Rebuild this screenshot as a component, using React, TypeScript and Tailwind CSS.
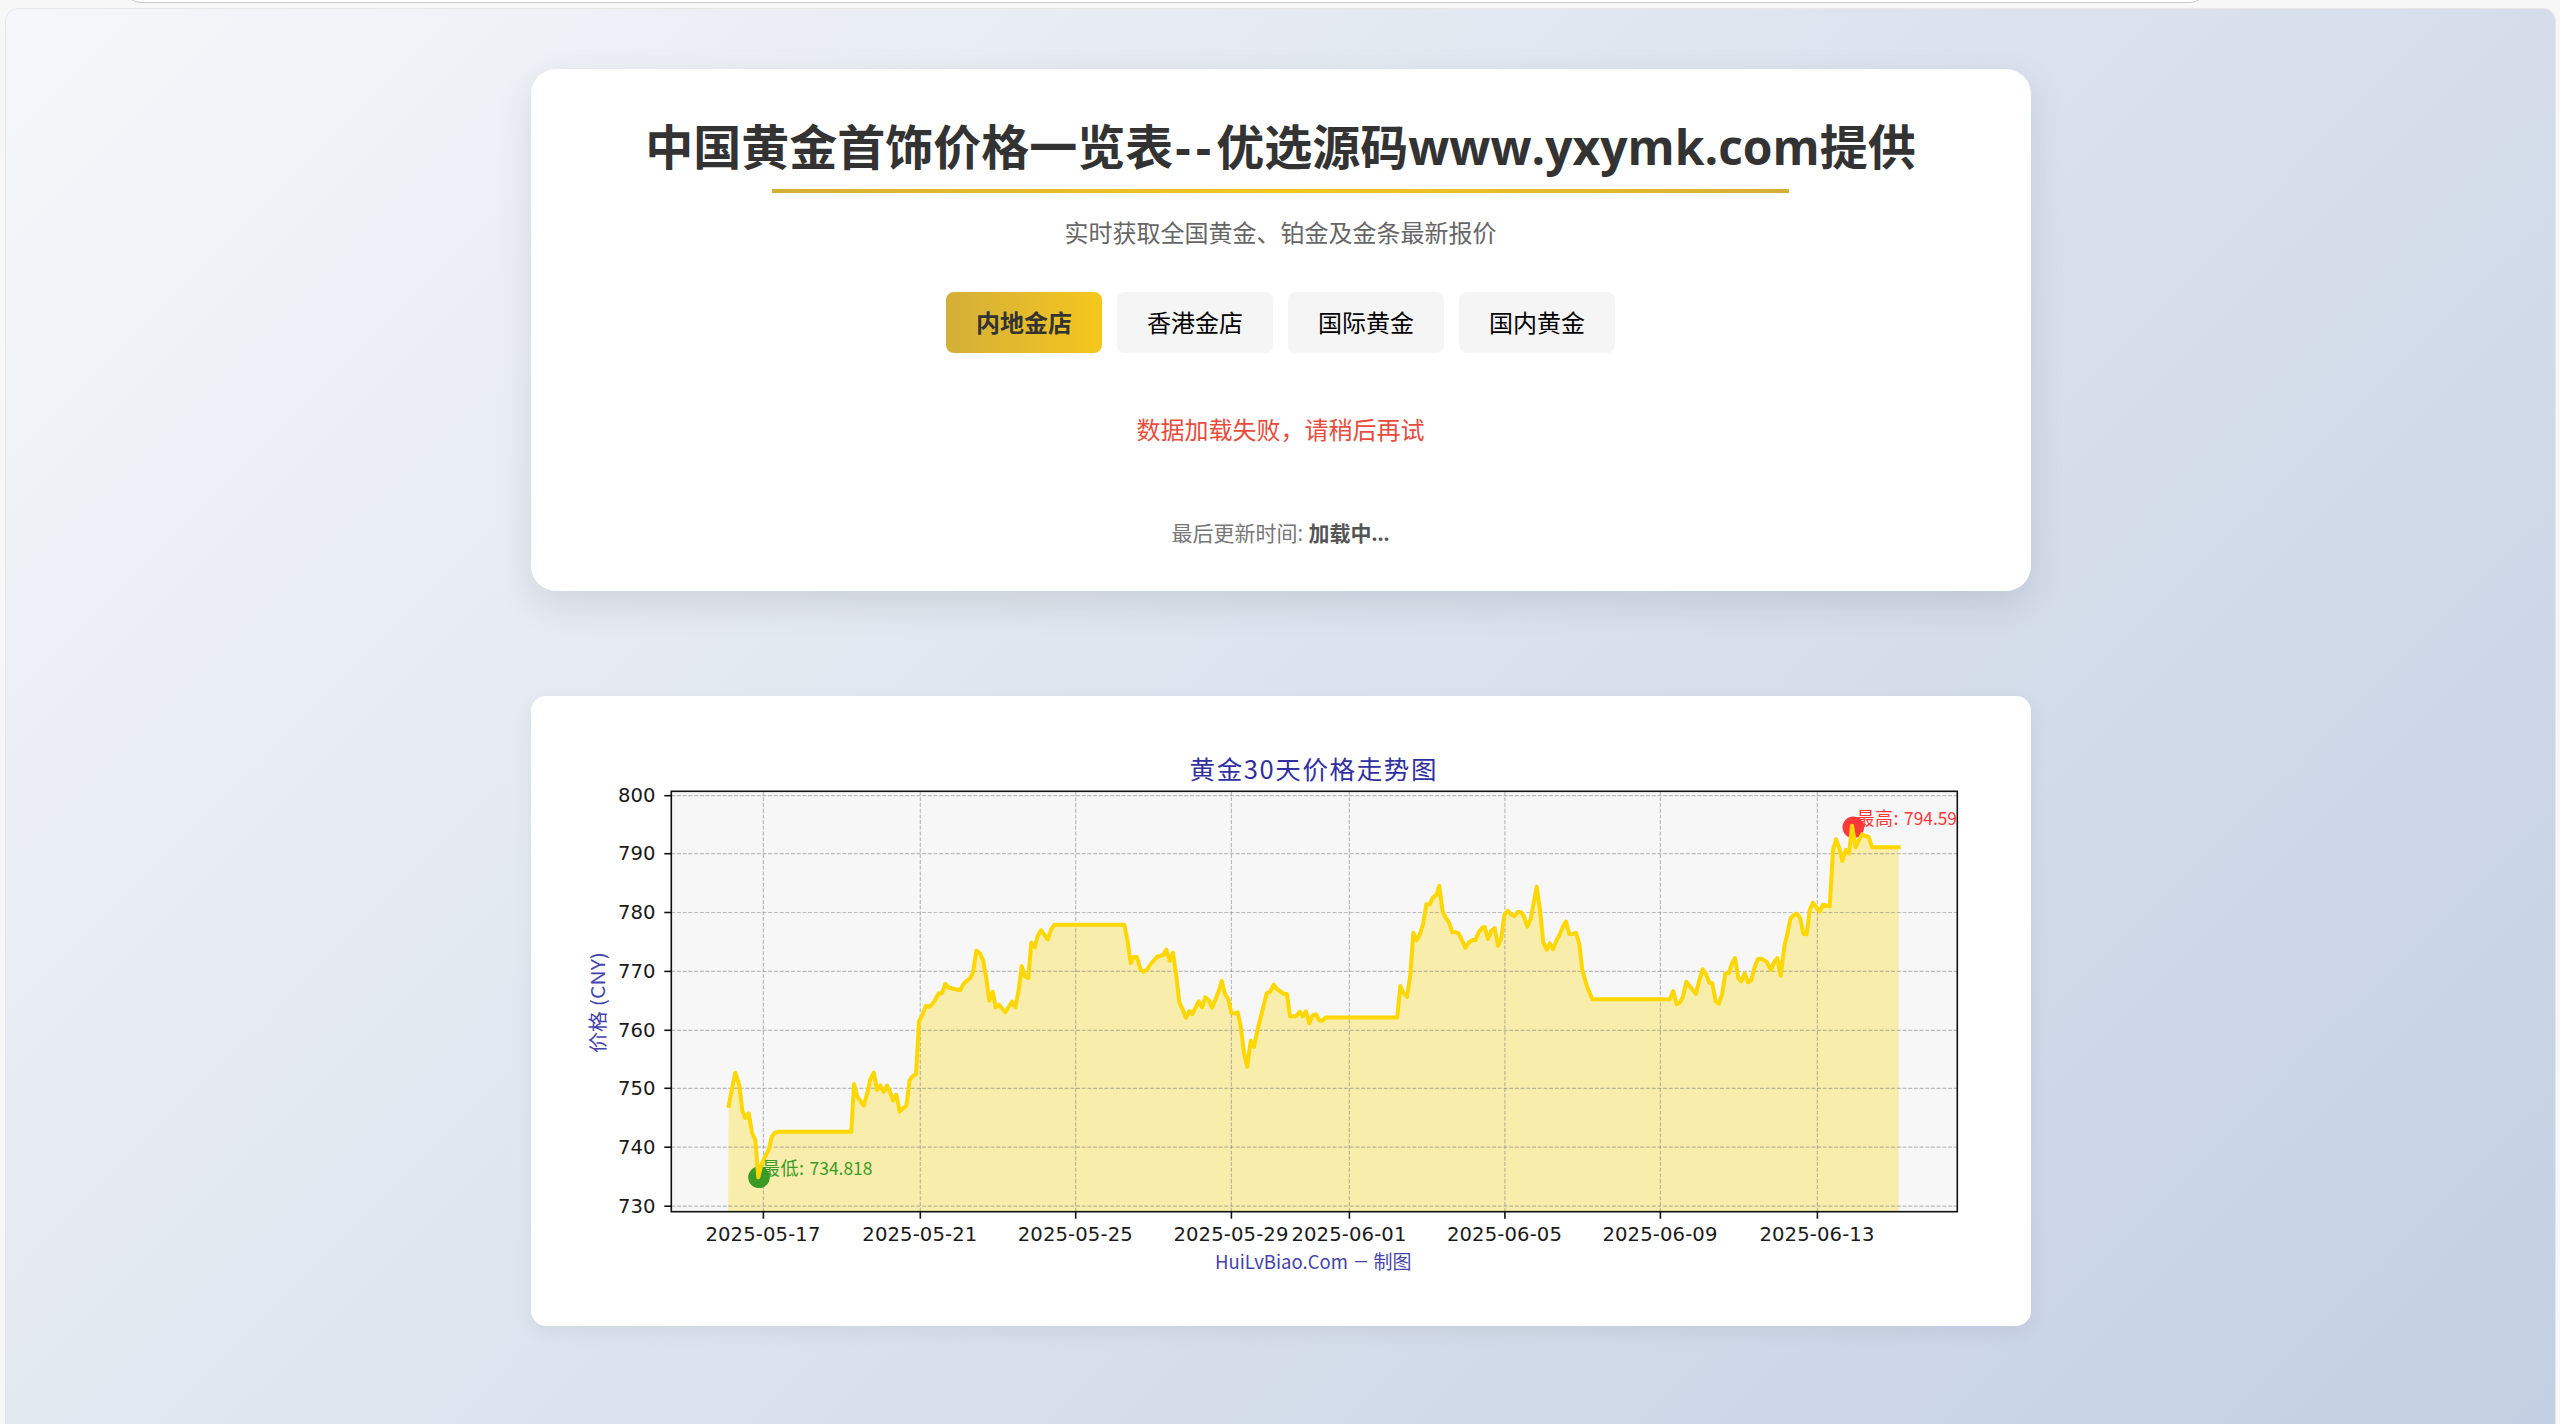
import React, { useState } from 'react'
import clsx from 'clsx'

const TABS = ['内地金店', '香港金店', '国际黄金', '国内黄金']

// Plot frame of the trend chart
const FRAME = { left: 671.3, top: 791.3, right: 1957.3, bottom: 1211.7 }

const Y_TICKS = [
  { label: '800', y: 795.7 },
  { label: '790', y: 853.7 },
  { label: '780', y: 912.5 },
  { label: '770', y: 971.4 },
  { label: '760', y: 1030.3 },
  { label: '750', y: 1088.3 },
  { label: '740', y: 1147.2 },
  { label: '730', y: 1206.2 }
]

const X_TICKS = [
  { label: '2025-05-17', x: 763.4 },
  { label: '2025-05-21', x: 920.3 },
  { label: '2025-05-25', x: 1075.7 },
  { label: '2025-05-29', x: 1231.4 },
  { label: '2025-06-01', x: 1349.4 },
  { label: '2025-06-05', x: 1504.9 },
  { label: '2025-06-09', x: 1660.4 },
  { label: '2025-06-13', x: 1817.4 }
]

const POINTS = [
  '728.7,1106 732.3,1087.3 735.3,1072.7 739.3,1085 742.3,1110.7 745.3,1118 748.7,1113.3 752,1132.7 755.3,1140 758.3,1177.3',
  '761.3,1165 765.3,1156 768.7,1150 771.7,1136.7 775,1132.7 779.3,1131.7 851.3,1131.7 854,1084 857.3,1096.7 863.7,1105.7',
  '867.3,1093.3 870.3,1079.3 873.7,1072.7 877,1090 880.3,1085.3 883.7,1092 887,1085.7 890,1091.7 893.3,1100.7 896.3,1094.7',
  '899.7,1111.7 903,1108.3 906.3,1106 909.7,1080 912.7,1076.3 916,1074 919,1021.7 922.7,1014 925.7,1006 929.7,1006.7',
  '934,1001.7 938.7,993.3 942,993.3 945.3,984 949,987.7 960,990.3 964,983.3 970,978.3 973,972.7 976.3,950.7',
  '980,953.3 983.3,960.7 986.3,978.3 989.3,1000.7 992.7,991.7 995.7,1007.3 999,1004.7 1005.3,1012.3 1012,1001.7 1015.3,1007.3',
  '1018.7,990 1021.7,966 1024.7,976 1028.3,978 1031.3,942.7 1034.7,947.3 1037.7,935.7 1041,930.3 1047.7,939.3 1051,930',
  '1054.3,924.7 1124.3,924.7 1127.7,941.7 1130.7,963.3 1134,957 1137,957 1140.3,969.3 1143.3,971.7 1146.7,970 1150.7,964',
  '1157.3,956.7 1163,955.3 1166.3,949.7 1169.7,960.7 1173,952.7 1176,973.3 1179.3,1002.3 1182.7,1009.3 1186,1018 1189.3,1011',
  '1192.3,1014 1198.7,1001.3 1202,1007.3 1205.3,997.3 1208.7,1000 1212,1007.7 1218.3,992.3 1221.7,981 1225,994 1228.3,999',
  '1231.3,1012.7 1234.7,1013.7 1237.7,1012.3 1241,1028.3 1244,1053.3 1247.3,1066.7 1250.7,1040.7 1254,1047 1257.3,1030.7 1260.7,1017.3',
  '1266.7,993.3 1270.3,991.7 1273.7,984.7 1277,989 1284,994 1287,994 1290,1016.3 1296,1016.3 1299.7,1011.7 1302.7,1016.3',
  '1306,1011.3 1309.3,1023.3 1312.7,1015.3 1316,1014.3 1319.3,1020.3 1322.3,1020.7 1325.7,1017.5 1397.2,1017.5 1400.3,986 1403.3,992.7',
  '1407,997 1410.3,975 1413.3,932.7 1416.7,940.3 1420,934 1423.3,923.3 1426.3,904.3 1429.7,904.3 1433,897.3 1436.3,895',
  '1439.3,886 1442.7,911.7 1445.7,917.7 1449,922.3 1452.3,932.3 1456,932.3 1459,933.7 1465.3,947.7 1469.3,942 1472.7,940',
  '1475.3,940.3 1478.7,932.3 1482,928 1484.7,927 1488,939 1491.3,930.7 1494.7,928 1498,946 1501.3,938.3 1504.3,915',
  '1507.7,910.7 1511,914.3 1514.3,916.3 1517.7,912 1521,912 1524,916.7 1527.3,926.7 1530.7,919 1536.7,886.7 1540,910',
  '1543.3,942.7 1546.7,949.7 1549.7,943.3 1553,949.3 1556.7,940 1560,934 1563.3,925.7 1566,921.7 1569.3,934 1572.7,934',
  '1576,932.7 1579.3,944 1582.3,970 1587.3,987.3 1592.3,999.3 1670,999.3 1673.3,991 1676.7,1004.3 1679.7,1002.7 1683,996.7',
  '1686.3,981.7 1696,994 1699.3,980 1702.7,969.3 1706,974 1709.3,982.7 1712.3,983.3 1715.7,1001.3 1718.7,1003.7 1722,994.7',
  '1725.3,973.3 1728.7,973.3 1732,963.3 1735,958 1738.3,978 1741.3,981.3 1744.7,973.3 1748,982.3 1751.3,980 1754.7,966.7',
  '1758,959 1761.7,958.7 1766.7,962 1771,970 1774.3,961.7 1777.3,958 1780.7,975.7 1784.3,946.7 1787.3,934 1790.3,919.3',
  '1793.3,915.3 1797,913.7 1800.3,918.3 1803.3,933.7 1806.7,934.3 1809.7,910 1813,902.7 1819.7,911.7 1823,904.7 1829.7,906.3',
  '1833,850 1836,839.3 1839.3,847.7 1842.3,861 1845.7,850 1849,853.7 1852,825.7 1855.7,847.3 1859,840 1862,834.3',
  '1865.3,836 1868.7,837 1872,847.3 1898.7,847.3'
].join(' ')

function TrendChart() {
  const { left, top, right, bottom } = FRAME

  return (
    <svg viewBox="531 696 1500 630" className="block w-full h-full">
      <defs>
        <clipPath id="plot">
          <rect x={left} y={top} width={right - left} height={bottom - top} />
        </clipPath>
      </defs>

      <text
        x="1189.5"
        y="779"
        textLength="247"
        className="text-[25.5px] fill-[#3030a0] font-['Noto_Sans_CJK_SC',sans-serif]"
      >
        黄金30天价格走势图
      </text>

      <rect x={left} y={top} width={right - left} height={bottom - top} fill="#f7f7f7" />

      <g clipPath="url(#plot)">
        <polygon
          points={`728,${bottom} ${POINTS} 1898.7,${bottom}`}
          fill="#ffd700"
          fillOpacity="0.3"
        />

        {/* Grid */}
        <g stroke="#808080" strokeOpacity="0.5" strokeWidth="1.2" strokeDasharray="4 1.7">
          {X_TICKS.map(({ label, x }) => (
            <line key={label} x1={x} x2={x} y1={bottom} y2={top} />
          ))}
          {Y_TICKS.map(({ label, y }) => (
            <line key={label} x1={left} x2={right} y1={y} y2={y} />
          ))}
        </g>

        {/* Lowest / highest markers */}
        <circle cx="759" cy="1177.3" r="10.8" fill="#399a26" />
        <circle cx="1853.3" cy="827.3" r="10.8" fill="#ff3939" />
        <polyline
          points={POINTS}
          fill="none"
          stroke="#ffd700"
          strokeWidth="4"
          strokeLinejoin="round"
          strokeLinecap="square"
        />
        <g className="text-[18px] font-['Noto_Sans_CJK_SC',sans-serif]">
          <g fill="#399a26">
            <text x="762" y="1175" textLength="42">最低:</text>
            <text x="809.5" y="1174.7" textLength="63" lengthAdjust="spacingAndGlyphs">734.818</text>
          </g>
          <g fill="#ff3939">
            <text x="1856.5" y="825.3" textLength="42">最高:</text>
            <text x="1904" y="825" textLength="53" lengthAdjust="spacingAndGlyphs">794.59</text>
          </g>
        </g>
      </g>

      {/* Axes */}
      <g stroke="#111111" strokeWidth="1.6">
        <rect x={left} y={top} width={right - left} height={bottom - top} fill="none" />
        {X_TICKS.map(({ label, x }) => (
          <line key={label} x1={x} x2={x} y1={bottom} y2={bottom + 7} />
        ))}
        {Y_TICKS.map(({ label, y }) => (
          <line key={label} x1={left - 7} x2={left} y1={y} y2={y} />
        ))}
      </g>
      <g className="text-[19.6px] fill-[#1a1a1a] font-['DejaVu_Sans',sans-serif]">
        {X_TICKS.map(({ label, x }) => (
          <text key={label} x={x - 0.5} y="1241.3" textAnchor="middle" textLength="115">
            {label}
          </text>
        ))}
        {Y_TICKS.map(({ label, y }) => (
          <text key={label} x="655.5" y={y + 6.6} textAnchor="end">
            {label}
          </text>
        ))}
      </g>

      <g className="text-[19px] fill-[#4444ac] font-['Noto_Sans_CJK_SC',sans-serif]">
        <text
          transform="translate(604.5 1053) rotate(-90)"
          textLength="101"
          lengthAdjust="spacingAndGlyphs"
        >
          价格 (CNY)
        </text>
        <text x="1215" y="1269.3" textLength="133" lengthAdjust="spacingAndGlyphs">
          HuiLvBiao.Com
        </text>
        <text x="1354" y="1269.3" textLength="14" lengthAdjust="spacingAndGlyphs">−</text>
        <text x="1373.5" y="1269.3" textLength="38">制图</text>
      </g>
    </svg>
  )
}

export default function App() {
  const [activeTab, setActiveTab] = useState(TABS[0])

  return (
    <div className="h-[1424px] overflow-hidden bg-[#f7f7f7] font-['Open_Sans','Noto_Sans_CJK_SC',sans-serif]">
      {/* Bottom edge of the browser address bar */}
      <div className="h-[3px] ml-[122px] w-[2087px] overflow-hidden flex items-end">
        <div className="h-10 w-full shrink-0 rounded-[20px] border border-[#c8c8c8] bg-white" />
      </div>

      <div className="mt-[5px] ml-[5px] w-[2551px] h-[1430px] rounded-t-[13px] border border-[#e6e6e6] bg-linear-[135deg,#f5f7fa_0%,#c3cfe2_100%] pt-[60px]">
        <main className="mx-auto w-[1500px] flex flex-col gap-[105px]">
          <section className="h-[522px] rounded-[25px] bg-white shadow-[0_12.5px_37.5px_rgba(0,0,0,0.1)] flex flex-col items-center pt-[39px]">
            <h1 className="relative h-[85px] leading-[78px] whitespace-nowrap text-5xl font-bold text-[#333333]">
              中国黄金首饰价格一览表<span className="pl-[2px] tracking-[5px]">--</span>优选源码www.yxymk.com提供
              <span className="absolute bottom-0 left-[10%] w-4/5 h-1 bg-linear-to-r from-[#d4af37] via-[#f5c71a] to-[#d4af37]" />
            </h1>
            <p className="mt-[20px] leading-[39px] text-2xl text-[#666666]">
              实时获取全国黄金、铂金及金条最新报价
            </p>

            <div className="mt-[40px] flex gap-[15px]">
              {TABS.map(tab => (
                <button
                  key={tab}
                  onClick={() => setActiveTab(tab)}
                  className={clsx(
                    'w-[156px] h-[61px] rounded-lg text-2xl',
                    tab === activeTab
                      ? 'bg-linear-to-r from-[#d4af37] to-[#f5c71a] font-bold text-[#333333]'
                      : 'bg-[#f5f5f5] text-black'
                  )}
                >
                  {tab}
                </button>
              ))}
            </div>

            <p className="mt-[57px] leading-[40px] text-2xl text-[#e74c3c]">
              数据加载失败，请稍后再试
            </p>
            <p className="mt-[63px] leading-[40px] text-[21px] text-[#777777]">
              最后更新时间: <strong className="text-[#555555]">加载中...</strong>
            </p>
          </section>

          <section className="h-[630px] rounded-[15px] bg-white shadow-[0_6px_19px_rgba(0,0,0,0.06)]">
            <TrendChart />
          </section>
        </main>
      </div>
    </div>
  )
}
